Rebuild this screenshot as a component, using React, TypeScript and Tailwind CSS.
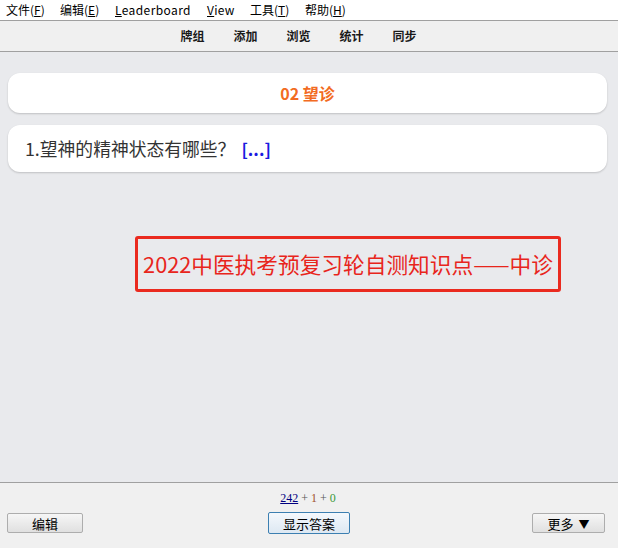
import React from "react";

const cjk = { fontFamily: '"Microsoft YaHei", "Noto Sans CJK SC", "Noto Sans", sans-serif' };

function MenuItem({ label, k, w }: { label: string; k: string; w: string }) {
  return (
    <span className={w + " shrink-0 whitespace-nowrap"}>
      {label}(<span className="underline">{k}</span>)
    </span>
  );
}

export default function App() {
  return (
    <div className="w-[618px] h-[548px] flex flex-col bg-[#e9eaed] overflow-hidden" style={cjk}>
      {/* menu bar */}
      <div className="h-[21px] bg-white flex items-center pl-[6px] text-[12px] text-black border-b border-[#a0a0a0] shrink-0">
        <MenuItem label="文件" k="F" w="w-[54px]" />
        <MenuItem label="编辑" k="E" w="w-[55px]" />
        <span className="w-[92px] shrink-0 tracking-[0.4px]">
          <span className="underline">L</span>eaderboard
        </span>
        <span className="w-[43px] shrink-0 tracking-[0.3px]">
          <span className="underline">V</span>iew
        </span>
        <MenuItem label="工具" k="T" w="w-[55px]" />
        <MenuItem label="帮助" k="H" w="w-[55px]" />
      </div>
      {/* toolbar */}
      <div className="h-[31px] bg-[#f0f0f0] border-b border-[#a0a0a0] flex items-center justify-center pr-[21px] text-[12px] font-bold text-[#1a1a1a] gap-[29px] shrink-0">
        <span>牌组</span>
        <span>添加</span>
        <span>浏览</span>
        <span>统计</span>
        <span>同步</span>
      </div>
      {/* main */}
      <div className="flex-1 flex flex-col px-[8px] pt-[21px]">
        <div className="h-[40px] bg-white rounded-[12px] shadow-[0_1px_2px_rgba(0,0,0,0.18)] flex items-center justify-center text-[16px] font-bold text-[#f26b22] mr-[3px]">
          02 望诊
        </div>
        <div className="h-[47px] mt-[12px] bg-white rounded-[12px] shadow-[0_1px_2px_rgba(0,0,0,0.18)] flex items-center pl-[17px] text-[17.8px] text-[#333] mr-[3px]">
          <span>1.望神的精神状态有哪些？</span>
          <span className="ml-[6px] font-bold text-[#1a1ae0] text-[17px]">[...]</span>
        </div>
        <div className="mt-[64px] self-start ml-[127px] w-[426px] h-[56px] border-[3px] border-[#ea2a1f] rounded-[3px] flex items-center justify-center text-[21.7px] text-[#e8251c]">
          2022中医执考预复习轮自测知识点——中诊
        </div>
      </div>
      {/* bottom bar */}
      <div className="h-[66px] bg-[#f0f0f0] border-t border-[#a0a0a0] shrink-0 flex flex-col">
        <div className="h-[29px] flex items-center justify-center text-[12px] pt-[1px] pr-[2px]" style={{ fontFamily: '"Liberation Serif", serif' }}>
          <span className="text-[#000080] underline">242</span>
          <span className="text-[#555] mx-[3px]">+</span>
          <span className="text-[#a0522d]">1</span>
          <span className="text-[#555] mx-[3px]">+</span>
          <span className="text-[#3a9a3a]">0</span>
        </div>
        <div className="flex items-start justify-between px-[7px] pr-[13px]">
          <button className="mt-[1px] w-[76px] h-[20px] border border-[#adadad] rounded-[2px] bg-gradient-to-b from-[#f6f6f6] to-[#e0e0e0] text-[13px] text-black leading-none">
            编辑
          </button>
          <button className="w-[82px] h-[22px] border border-[#3c7fb1] rounded-[2px] bg-gradient-to-b from-[#f4f8fc] to-[#dde8f2] text-[13px] text-black leading-none ml-[3px]">
            显示答案
          </button>
          <button className="mt-[1px] w-[73px] h-[20px] border border-[#adadad] rounded-[2px] bg-gradient-to-b from-[#f6f6f6] to-[#e0e0e0] text-[13px] text-black leading-none">
            更多<span className="ml-[5px] text-[11px]">▼</span>
          </button>
        </div>
      </div>
    </div>
  );
}
